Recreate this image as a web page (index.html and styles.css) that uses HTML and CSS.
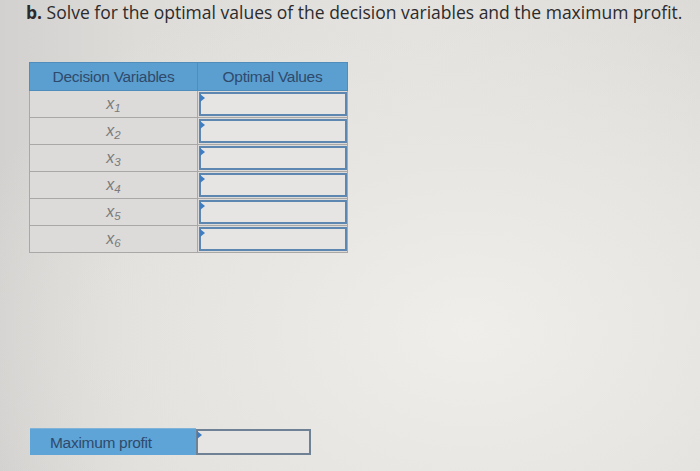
FILE: index.html
```html
<!DOCTYPE html>
<html>
<head>
<meta charset="utf-8">
<link rel="stylesheet" href="styles.css">
</head>
<body>
<div class="page">
  <p class="prompt"><b>b.</b> Solve for the optimal values of the decision variables and the maximum profit.</p>
  <table class="grid">
    <thead>
      <tr><th>Decision Variables</th><th>Optimal Values</th></tr>
    </thead>
    <tbody>
      <tr><td class="var">x<sub>1</sub></td><td class="val"><div class="box"></div></td></tr>
      <tr><td class="var">x<sub>2</sub></td><td class="val"><div class="box"></div></td></tr>
      <tr><td class="var">x<sub>3</sub></td><td class="val"><div class="box"></div></td></tr>
      <tr><td class="var">x<sub>4</sub></td><td class="val"><div class="box"></div></td></tr>
      <tr><td class="var">x<sub>5</sub></td><td class="val"><div class="box"></div></td></tr>
      <tr><td class="var">x<sub>6</sub></td><td class="val"><div class="box"></div></td></tr>
    </tbody>
  </table>
  <div class="profit">
    <div class="profit-label">Maximum profit</div>
    <div class="box profit-box"></div>
  </div>
</div>
</body>
</html>
```
FILE: styles.css
```css
html, body {
  margin: 0;
  height: 100%;
}
body {
  width: 700px;
  height: 471px;
  overflow: hidden;
  background:
    radial-gradient(ellipse 520px 380px at 470px 330px, #efeeeb 0%, #e7e6e2 45%, rgba(222,220,217,0) 100%),
    linear-gradient(90deg, #d2d1cf 0%, #dedcd9 20%, #e3e1dd 60%, #dcdad7 100%);
  font-family: "Liberation Sans", Arial, sans-serif;
}
.page {
  padding: 2px 0 0 29px;
  display: flex;
  flex-direction: column;
}
.prompt {
  margin: 0 0 0 -3px;
  font-size: 17.5px;
  line-height: 20px;
  color: #2b2b2d;
  font-family: "Open Sans", "Liberation Sans", sans-serif;
  letter-spacing: 0;
  white-space: nowrap;
}
.prompt b {
  font-weight: 700;
}
.grid {
  margin-top: 40px;
  border-collapse: collapse;
  width: 319px;
}
.grid th {
  background: #5b9fd0;
  color: #2f4a6c;
  font-weight: normal;
  font-size: 15.5px;
  letter-spacing: -0.3px;
  height: 27px;
  padding: 0;
  border: 1px solid #4f8dbd;
  text-align: center;
}
.grid th:first-child { width: 167px; }
.grid td {
  padding: 0;
  height: 25px;
  border: 1px solid #a9a8a7;
}
.var {
  background: #dcdbd9;
  color: #7a7a7c;
  text-align: center;
  font-size: 16px;
  font-style: italic;
  line-height: 20px;
}
.var sub {
  font-size: 11.5px;
  line-height: 0;
  vertical-align: -3px;
}
.val {
  padding: 1px 0 0 1px !important;
  background: #dcdbd9;
  vertical-align: top;
}
.box {
  position: relative;
  box-sizing: border-box;
  height: 24px;
  border: 2px solid #5d87b0;
  background: #e6e5e3;
}
.box::before {
  content: "";
  position: absolute;
  left: -1px;
  top: 0;
  border-top: 4px solid transparent;
  border-bottom: 4px solid transparent;
  border-left: 5px solid #3f7cc0;
}
.profit {
  margin-top: 175px;
  display: flex;
  align-items: flex-start;
}
.profit-label {
  box-sizing: border-box;
  width: 166px;
  height: 27px;
  margin-left: 1px;
  background: #5ea4d6;
  color: #2f4a6c;
  font-size: 15.5px;
  letter-spacing: -0.3px;
  line-height: 27px;
  padding-left: 20px;
  border-top: 1px solid #7fb3d8;
}
.profit-box {
  width: 115px;
  height: 26px;
  margin-top: 1px;
  border-color: #6f8194;
}
```
